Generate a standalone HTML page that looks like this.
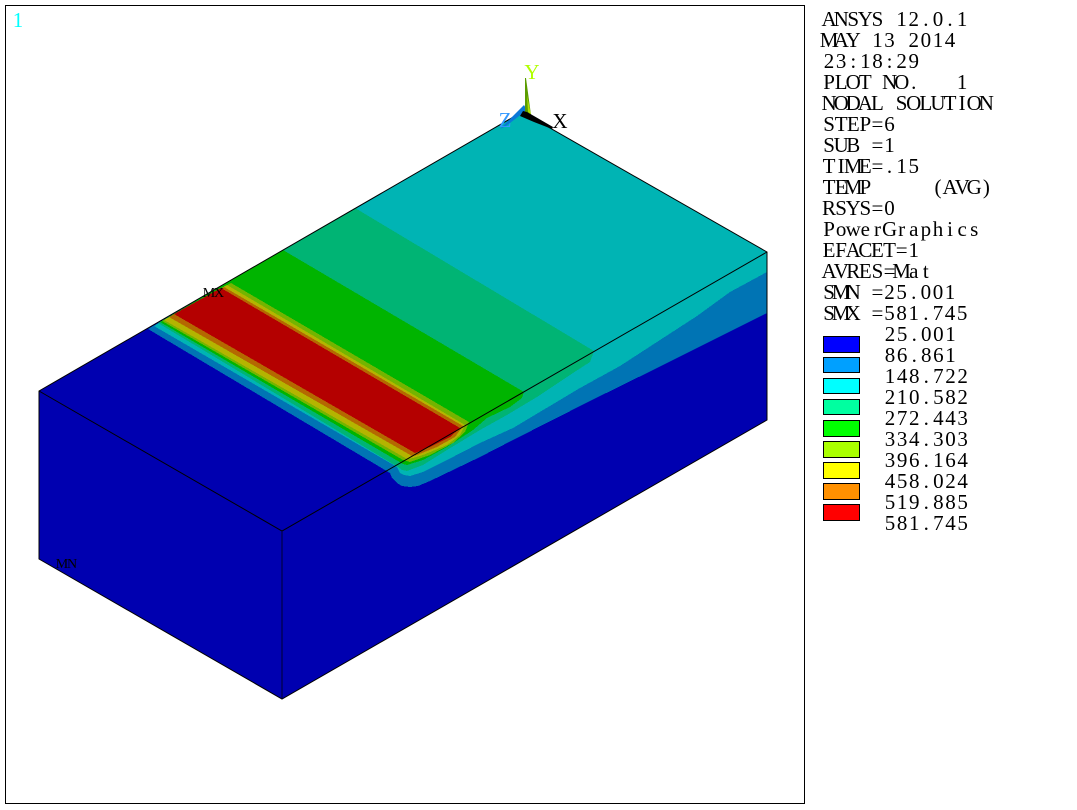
<!DOCTYPE html>
<html><head><meta charset="utf-8"><style>
html,body{margin:0;padding:0;background:#fff;width:1077px;height:810px;overflow:hidden}
svg{display:block}
text{font-family:"Liberation Serif",serif;font-size:21px;fill:#000;white-space:pre;text-anchor:middle}
.p polygon,.p rect{shape-rendering:crispEdges}
</style></head><body>
<svg width="1077" height="810" viewBox="0 0 1077 810">
<rect x="5.5" y="5.5" width="799" height="798" fill="#fff" stroke="#000" stroke-width="1" shape-rendering="crispEdges"/>
<g class="p">
<polygon fill="#0000b0" points="522,112 767,252 767,420 282,699 39,559 39,391"/>
<polygon fill="#0074b4" points="148,329 522,112 767,252 767,313 713,340 653,370 590,401 513,440 480,457 430,481 418,486 410,487 402,486 397,483 392,478 390,473"/>
<polygon fill="#00b4b4" points="154,326 522,112 767,252 767,272 730,292 697,316 660,340 620,366 580,388 513,428 480,443 447,460 423,472 410,476 404,475 400,473 397,467"/>
<polygon fill="#00b474" points="355,208 594,351 590,362 573,373 537,397 507,415 480,430 447,450 423,465 407,471 402,470 398,467 158,323"/>
<polygon fill="#00b400" points="283,250 524,392 522,398 510,407 487,418 473,430 447,447 423,460 407,465 403,464 160,322"/>
<polygon fill="#74b400" points="231,283 469,422 465,432 453,443 430,455 410,462 403,460 162,321"/>
<polygon fill="#b4b400" points="227,285 465,425 460,435 447,445 423,455 413,458 407,459 164,320"/>
<polygon fill="#b46800" points="224,287 463,426 455,437 437,447 417,455 412,456 169,317"/>
<polygon fill="#b40000" points="221,288 460,428 450,437 430,447 415,453 174,314"/>
</g>
<g fill="none" stroke="#000" stroke-width="1">
<polygon points="522,112 767,252 767,420 282,699 39,559 39,391"/>
<polyline points="39,391 282,531 767,252"/>
<line x1="282" y1="531" x2="282" y2="699" stroke="#000030"/>
</g>
<!-- triad -->
<polygon fill="#0a78d8" points="524,105 527,110 506,126 500,129"/>
<polygon fill="#5a9c00" points="525,78 526,78 531,115 525,112"/>
<polygon fill="#b0e000" points="527,95 531,115 528,112"/>
<polygon fill="#000" points="523,111 527,112 553,127 552,129 534,122 520,116"/>
<text x="532" y="79" style="fill:#b0ff00">Y</text>
<text x="505" y="127" style="fill:#3399ff">Z</text>
<text x="560" y="128">X</text>
<text x="18" y="27" style="fill:#00ffff">1</text>
<text x="209 219" y="297" style="font-size:14px">MX</text>
<text x="62 72" y="568" style="font-size:14px">MN</text>
<text x="829.05 841.15 853.25 865.35 877.45 889.55 901.65 913.75 925.85 937.95 950.05 962.15 974.25 986.35" y="26">ANSYS 12.0.1</text>
<text x="829.05 841.15 853.25 865.35 877.45 889.55 901.65 913.75 925.85 937.95 950.05 962.15 974.25 986.35" y="47">MAY 13 2014</text>
<text x="829.05 841.15 853.25 865.35 877.45 889.55 901.65 913.75 925.85 937.95 950.05 962.15 974.25 986.35" y="68">23:18:29</text>
<text x="829.05 841.15 853.25 865.35 877.45 889.55 901.65 913.75 925.85 937.95 950.05 962.15 974.25 986.35" y="89">PLOT NO.   1</text>
<text x="829.05 841.15 853.25 865.35 877.45 889.55 901.65 913.75 925.85 937.95 950.05 962.15 974.25 986.35" y="110">NODAL SOLUTION</text>
<text x="829.05 841.15 853.25 865.35 877.45 889.55 901.65 913.75 925.85 937.95 950.05 962.15 974.25 986.35" y="131">STEP=6</text>
<text x="829.05 841.15 853.25 865.35 877.45 889.55 901.65 913.75 925.85 937.95 950.05 962.15 974.25 986.35" y="152">SUB =1</text>
<text x="829.05 841.15 853.25 865.35 877.45 889.55 901.65 913.75 925.85 937.95 950.05 962.15 974.25 986.35" y="173">TIME=.15</text>
<text x="829.05 841.15 853.25 865.35 877.45 889.55 901.65 913.75 925.85 937.95 950.05 962.15 974.25 986.35" y="194">TEMP     (AVG)</text>
<text x="829.05 841.15 853.25 865.35 877.45 889.55 901.65 913.75 925.85 937.95 950.05 962.15 974.25 986.35" y="215">RSYS=0</text>
<text x="829.05 841.15 853.25 865.35 877.45 889.55 901.65 913.75 925.85 937.95 950.05 962.15 974.25 986.35" y="236">PowerGraphics</text>
<text x="829.05 841.15 853.25 865.35 877.45 889.55 901.65 913.75 925.85 937.95 950.05 962.15 974.25 986.35" y="257">EFACET=1</text>
<text x="829.05 841.15 853.25 865.35 877.45 889.55 901.65 913.75 925.85 937.95 950.05 962.15 974.25 986.35" y="278">AVRES=Mat</text>
<text x="829.05 841.15 853.25 865.35 877.45 889.55 901.65 913.75 925.85 937.95 950.05 962.15 974.25 986.35" y="299">SMN =25.001</text>
<text x="829.05 841.15 853.25 865.35 877.45 889.55 901.65 913.75 925.85 937.95 950.05 962.15 974.25 986.35" y="320">SMX =581.745</text>
<text x="890 902.1 914.2 926.3 938.4 950.5 962.6" y="341">25.001</text>
<text x="890 902.1 914.2 926.3 938.4 950.5 962.6" y="362">86.861</text>
<text x="890 902.1 914.2 926.3 938.4 950.5 962.6" y="383">148.722</text>
<text x="890 902.1 914.2 926.3 938.4 950.5 962.6" y="404">210.582</text>
<text x="890 902.1 914.2 926.3 938.4 950.5 962.6" y="425">272.443</text>
<text x="890 902.1 914.2 926.3 938.4 950.5 962.6" y="446">334.303</text>
<text x="890 902.1 914.2 926.3 938.4 950.5 962.6" y="467">396.164</text>
<text x="890 902.1 914.2 926.3 938.4 950.5 962.6" y="488">458.024</text>
<text x="890 902.1 914.2 926.3 938.4 950.5 962.6" y="509">519.885</text>
<text x="890 902.1 914.2 926.3 938.4 950.5 962.6" y="530">581.745</text>
<g class="p" stroke="#000" stroke-width="1">
<rect x="823.5" y="336.5" width="36" height="16" fill="#0000ff"/>
<rect x="823.5" y="357.5" width="36" height="15" fill="#00a0ff"/>
<rect x="823.5" y="378.5" width="36" height="15" fill="#00ffff"/>
<rect x="823.5" y="399.5" width="36" height="15" fill="#00ffa0"/>
<rect x="823.5" y="420.5" width="36" height="16" fill="#00ff00"/>
<rect x="823.5" y="441.5" width="36" height="16" fill="#aaff00"/>
<rect x="823.5" y="462.5" width="36" height="16" fill="#ffff00"/>
<rect x="823.5" y="483.5" width="36" height="16" fill="#ff9000"/>
<rect x="823.5" y="504.5" width="36" height="16" fill="#ff0000"/>
</g>
</svg>
</body></html>
